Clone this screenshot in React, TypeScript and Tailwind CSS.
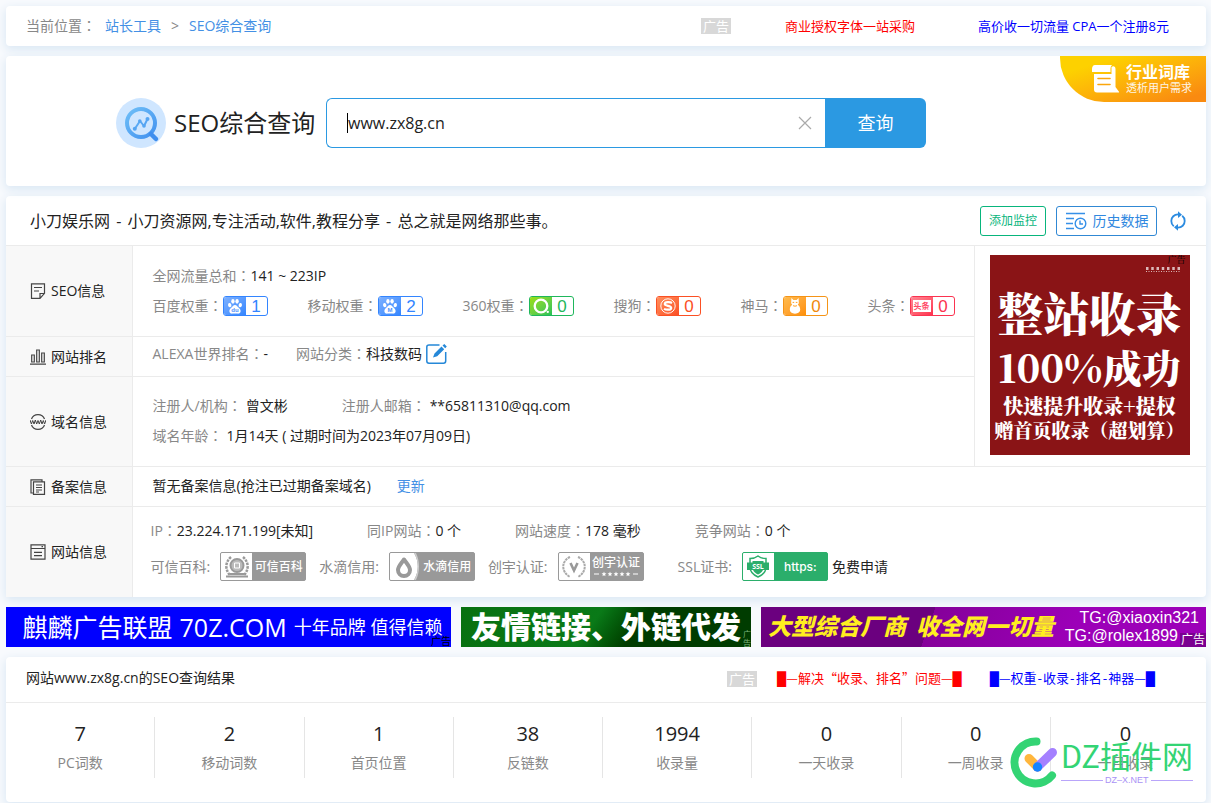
import type { ReactNode } from "react";

const CARD = "rounded bg-white shadow-[0_3px_10px_1px_#dbe8f4]";

function PawIcon({ mark }: { mark: string }) {
  return (
    <svg viewBox="0 0 20 20" className="size-4" fill="#fff">
      <ellipse cx="3.4" cy="9" rx="2.1" ry="2.7" transform="rotate(-12 3.4 9)" />
      <ellipse cx="7.4" cy="4.2" rx="2.1" ry="2.9" />
      <ellipse cx="12.6" cy="4.2" rx="2.1" ry="2.9" />
      <ellipse cx="16.6" cy="9" rx="2.1" ry="2.7" transform="rotate(12 16.6 9)" />
      <path d="M10 8.6c2 0 2.700 1.500 4 3 1.400 1.500 3.300 2.600 3 5.300-.3 2.300-2.300 2.800-4 2.600-1.200-.2-4.800-.2-6 0-1.700.2-3.700-.3-4-2.600-.3-2.700 1.600-3.800 3-5.300 1.300-1.500 2-3 4-3z" />
      <text x="10" y="17.500" textAnchor="middle" fontSize="7.500" fontWeight="700" fontFamily="Liberation Sans, sans-serif" fill="#4a90fb">{mark}</text>
    </svg>
  );
}

const rankIcons: Record<string, ReactNode> = {
  baidu: <PawIcon mark="du" />,
  mobile: <PawIcon mark="M" />,
  so360: (
    <svg viewBox="0 0 20 20" className="size-[18px]">
      <circle cx="10" cy="10" r="7" fill="none" stroke="#fff" strokeWidth="2.600" />
      <circle cx="17.500" cy="16.500" r="1.300" fill="#fff" />
    </svg>
  ),
  sogou: (
    <svg viewBox="0 0 20 20" className="size-4" fill="none" stroke="#fff">
      <circle cx="10" cy="10" r="9" strokeWidth="1.200" />
      <path d="M15 6.200C13 5 6 4.500 6 7.600c0 2.600 8 1.900 8 4.800 0 3-6.500 2.600-9 1.200" strokeWidth="2.800" />
    </svg>
  ),
  shenma: (
    <svg viewBox="0 0 20 20" className="size-4" fill="#fff">
      <path d="M5.500 0l2.500 2.500h4L14.500 0l.3 6.500-1.300 2c2 1.500 3 3.500 3 6 0 3-2.500 5.200-6.500 5.200s-6.500-2.200-6.500-5.200c0-2.500 1-4.500 3-6l-1.300-2z" />
      <path d="M7 5.500h2M11 5.500h2M7.500 9.500c1.500.9 3.500.9 5 0" stroke="#ff9c1a" strokeWidth="1.200" fill="none" />
    </svg>
  ),
  toutiao: (
    <span className="flex h-3 w-[18px] items-center justify-center bg-white text-[8px] leading-none font-bold text-[#ff4a66]">头条</span>
  ),
};

const ranks = [
  { label: "百度权重：", icon: "baidu", value: 1, frame: "border-[#3385ff] text-[#3385ff]", fill: "from-[#7db1ff] to-[#3385ff]" },
  { label: "移动权重：", icon: "mobile", value: 2, frame: "border-[#3385ff] text-[#3385ff]", fill: "from-[#7db1ff] to-[#3385ff]" },
  { label: "360权重：", icon: "so360", value: 0, frame: "border-[#1fb75c] text-[#1fb75c]", fill: "from-[#9be000] to-[#1fc256]" },
  { label: "搜狗：", icon: "sogou", value: 0, frame: "border-[#fb5024] text-[#fb5024]", fill: "from-[#ff8f5c] to-[#fb4d22]" },
  { label: "神马：", icon: "shenma", value: 0, frame: "border-[#f59417] text-[#f08a0c]", fill: "from-[#ffbb4d] to-[#ff8f00]" },
  { label: "头条：", icon: "toutiao", value: 0, frame: "border-[#fb3350] text-[#fb3350]", fill: "from-[#ff8593] to-[#ff2d4f]" },
];

function RankBadge({ icon, value, frame, fill }: { icon: string; value: number; frame: string; fill: string }) {
  return (
    <a href="#" className={`flex h-5 w-[45px] overflow-hidden rounded-[3px] border ${frame}`}>
      <span className={`flex w-[22px] items-center justify-center bg-linear-to-br ${fill}`}>{rankIcons[icon]}</span>
      <span className="flex flex-1 items-center justify-center font-['Liberation_Sans',sans-serif] text-[17px] leading-none">{value}</span>
    </a>
  );
}

function RowLabel({ icon, children }: { icon: ReactNode; children: ReactNode }) {
  return (
    <th scope="row" className="w-[126px] border-r border-[#ebebeb] bg-[#f8f8f8] p-0 pl-6 text-left align-middle font-normal">
      <span className="flex items-center gap-[5px]">
        <svg viewBox="0 0 16 16" className="size-4" fill="none" stroke="#444" strokeWidth="1.200">{icon}</svg>
        {children}
      </span>
    </th>
  );
}

/* The TC face centres the full-width colon in its cell. */
function Label({ text }: { text: string }) {
  const wide = text.endsWith("：");
  return (
    <span className="text-[#888]">
      {wide ? text.slice(0, -1) : text}
      {wide && <span className="font-['Noto_Sans_CJK_TC',sans-serif] leading-none">：</span>}
    </span>
  );
}

function Field({ label, children, gap = "" }: { label: string; children: ReactNode; gap?: string }) {
  return (
    <span className={`flex items-center ${gap}`}>
      <Label text={label} />
      {children}
    </span>
  );
}

function CertBadge({ icon, title, stars }: { icon: ReactNode; title: string; stars?: boolean }) {
  return (
    <a href="#" className="flex h-[29px] w-[86px] overflow-hidden rounded-[2px] border border-[#999] bg-[#999] text-white">
      <span className="flex w-[31px] items-center justify-center bg-white">{icon}</span>
      <span className="flex flex-1 flex-col items-center justify-center text-xs leading-[14px] font-medium">
        {title}
        {stars && (
          <svg viewBox="0 0 46 8" className="h-2 w-[46px]" fill="#fff">
            <path d="M1 3.500h5v1H1zM40 3.500h5v1h-5z" />
            {[11, 17, 23, 29, 35].map((x) => (
              <path key={x} transform={`translate(${x} 4)`} d="M0-2.500.7-.8 2.400-.8 1.100.4 1.500 2.200 0 1.200-1.500 2.200-1.100.4-2.400-.8-.7-.8z" />
            ))}
          </svg>
        )}
      </span>
    </a>
  );
}

function AdTag() {
  return <span className="bg-[#d8d8d8] px-[2px] text-[13px] leading-4 text-white">广告</span>;
}

function Block() {
  return <span className="font-['Liberation_Sans',sans-serif] text-[13px]">█</span>;
}

function Dash() {
  return <span className="mx-px">-</span>;
}

const stats = [
  ["7", "PC词数"],
  ["2", "移动词数"],
  ["1", "首页位置"],
  ["38", "反链数"],
  ["1994", "收录量"],
  ["0", "一天收录"],
  ["0", "一周收录"],
  ["0", "一月收录"],
];

export default function App() {
  return (
    <div className="flex min-h-screen flex-col gap-2.5 overflow-hidden bg-[#f8fafd] pt-1.5 pr-[5px] pl-1.5 font-['Open_Sans','Noto_Sans_CJK_SC',sans-serif] text-sm text-[#222]">
      <header className={`flex h-10 items-center justify-between pr-[37px] pl-5 ${CARD}`}>
        <nav className="flex items-center text-[#888]">
          <Label text="当前位置：" />
          <a href="#" className="ml-[9px] text-[#4490e5]">站长工具</a>
          <span className="mx-[10px]">&gt;</span>
          <a href="#" className="text-[#4490e5]">SEO综合查询</a>
        </nav>
        <div className="flex items-center text-[13px]">
          <AdTag />
          <a href="#" className="ml-[54px] text-[#f00]">商业授权字体一站采购</a>
          <a href="#" className="ml-[63px] text-[#00f]">高价收一切流量 CPA一个注册8元</a>
        </div>
      </header>

      <section className={`relative flex h-[130px] items-start pt-[42px] pl-[110px] ${CARD}`}>
        <div className="flex h-[50px] items-center">
          <svg viewBox="0 0 50 50" className="size-[50px]" fill="none">
            <defs>
              <linearGradient id="lens" x1="10" y1="10" x2="40" y2="42" gradientUnits="userSpaceOnUse">
                <stop stopColor="#6fc0f8" />
                <stop offset="1" stopColor="#3f8eee" />
              </linearGradient>
            </defs>
            <circle cx="25" cy="25" r="25" fill="#cfe6ff" />
            <circle cx="25" cy="25" r="14" stroke="url(#lens)" strokeWidth="4" />
            <path d="M35 36l5 5" stroke="#3f8eee" strokeWidth="4.500" strokeLinecap="round" />
            <path d="M19 30.500l5-7.500 4 5 3.500-7" stroke="url(#lens)" strokeWidth="2" strokeLinejoin="round" />
            <g fill="#55a5f2">
              <circle cx="18.800" cy="30.800" r="2" />
              <circle cx="23.800" cy="23" r="1.800" />
              <circle cx="28" cy="28" r="1.800" />
              <circle cx="31.500" cy="21" r="2" />
            </g>
          </svg>
          <h1 className="ml-2 w-[152px] text-2xl whitespace-nowrap">SEO综合查询</h1>
        </div>
        <form className="flex h-[50px] w-[600px]" onSubmit={(e) => e.preventDefault()}>
          <div className="flex flex-1 items-center rounded-l-md border border-r-0 border-[#2b99e2] pr-[13px] pl-5">
            <span className="h-5 w-px bg-black" />
            <input aria-label="域名" defaultValue="www.zx8g.cn" className="min-w-0 flex-1 bg-transparent text-base outline-none" />
            <button type="button" aria-label="清空">
              <svg viewBox="0 0 14 14" className="size-3.5" stroke="#aaa" strokeWidth="1.200">
                <path d="M1 1l12 12M13 1L1 13" />
              </svg>
            </button>
          </div>
          <button type="submit" className="w-[101px] rounded-r-md bg-[#2b99e2] text-lg text-white">查询</button>
        </form>
        <a href="#" className="absolute top-0 right-0 flex h-[46px] w-[146px] items-center rounded-bl-[44px] bg-linear-to-br from-[#fdd100] from-20% to-[#f98a10] to-90% pl-8 text-white">
          <svg viewBox="0 0 27 28" className="h-7 w-[27px]">
            <path d="M3 0h17c-2 2-1.500 4-1.500 7H0V4c0-2 1-4 3-4z" fill="#fff" />
            <path d="M19.500 2c2-1.500 4-.5 4 2v18l4 5.500H5c-2 0-3-1-3-3V9h17.500z" fill="#fff" />
            <path d="M6 13.500h12M6 19.500h12" stroke="#fba60c" strokeWidth="1.600" strokeLinecap="round" />
          </svg>
          <span className="ml-[7px] flex flex-col">
            <b className="text-base leading-[18px] font-bold">行业词库</b>
            <span className="text-[11px] leading-[14px] whitespace-nowrap opacity-90">透析用户需求</span>
          </span>
        </a>
      </section>

      <section className={CARD}>
        <div className="flex h-[49px] items-center pr-5 pl-6">
          <h2 className="flex-1 text-base">
            小刀娱乐网<span className="mx-0.5"> - </span>小刀资源网,专注活动,软件,教程分享<span className="mx-0.5"> - </span>总之就是网络那些事。
          </h2>
          <button type="button" className="h-[30px] w-[66px] rounded-[3px] border border-[#08b57c] text-xs text-[#08b57c]">添加监控</button>
          <button type="button" className="ml-2.5 flex h-[30px] w-[101px] items-center justify-center gap-1.5 rounded-[3px] border border-[#3088d4] text-sm text-[#3088e0]">
            <svg viewBox="0 0 22 18" className="h-[18px] w-[22px]" fill="none" stroke="#3690e8" strokeWidth="1.400">
              <path d="M1 1.500h19M1 6.500h8M1 11.500h7M1 16.500h8" />
              <circle cx="15.500" cy="11.500" r="5.300" />
              <path d="M15 8.500v3.500h3" />
            </svg>
            历史数据
          </button>
          <button type="button" aria-label="刷新" className="ml-[13px]">
            <svg viewBox="0 0 16 20" className="h-5 w-4" fill="none" stroke="#2b8be0" strokeWidth="1.800">
              <path d="M9 3.500C4 3 1.300 6.500 1.300 10c0 2 .8 4 2.500 5.300M7 16.500c5 .5 7.700-3 7.700-6.500 0-2-.8-4-2.500-5.300" />
              <path d="M8 .3l4 3.500-4 3.200zM8 13v6.700L4 16.200z" fill="#2b8be0" stroke="none" />
            </svg>
          </button>
        </div>
        <table className="w-full border-collapse">
          <tbody>
            <tr className="h-[91px] border-t border-[#ebebeb]">
              <RowLabel icon={<path d="M1.500.8h13v9.500l-4.500 5H1.500zM14.500 10.500H10v4.500M4 4.500h8M4 8h5" />}>SEO信息</RowLabel>
              <td className="p-0 pl-5">
                <div className="flex h-[30px] items-center">
                  <Field label="全网流量总和：">141 ~ 223IP</Field>
                </div>
                <div className="flex h-[30px] items-center gap-10 whitespace-nowrap">
                  {ranks.map(({ label, ...badge }) => (
                    <Field key={label} label={label}>
                      <RankBadge {...badge} />
                    </Field>
                  ))}
                </div>
              </td>
              <td rowSpan={3} className="w-[232px] border-l border-[#ebebeb] p-0 pt-[9px] pl-[15px] align-top">
                <a href="#" className="relative flex size-[200px] flex-col items-center bg-[#8a1416] pt-[29px] font-['Noto_Serif_CJK_SC','Liberation_Serif','Noto_Sans_CJK_SC',serif] font-black whitespace-nowrap text-white">
                  <span className="absolute top-0 right-1 text-[9px] leading-[10px] font-normal text-black">广告</span>
                  <svg viewBox="0 0 34 5" className="absolute top-3 right-2.5 h-[5px] w-[34px]" stroke="#fff" strokeOpacity="0.700">
                    <path d="M0 1.500h34" strokeWidth="3" strokeDasharray="2.500 2.750" />
                    <path d="M0 4.500h34" strokeWidth="1" strokeDasharray="1 1.500" />
                  </svg>
                  <span className="text-[46px] leading-[54px]">整站收录</span>
                  <span className="text-[39px] leading-[56px]">100%成功</span>
                  <span className="text-xl leading-6">快速提升收录+提权</span>
                  <span className="text-[19px] leading-6">赠首页收录（超划算）</span>
                </a>
              </td>
            </tr>
            <tr className="h-10 border-t border-[#ebebeb]">
              <RowLabel icon={<path d="M0 15.200h16M1.700 13V6h2.600v7zM6.700 13V1h2.600v12zM11.700 13V4h2.600v9z" />}>网站排名</RowLabel>
              <td className="p-0 pb-1.5 pl-5">
                <div className="flex items-center gap-7">
                  <Field label="ALEXA世界排名：">-</Field>
                  <Field label="网站分类：">
                    科技数码
                    <a href="#" aria-label="编辑" className="ml-1">
                      <svg viewBox="0 0 21 20" className="h-5 w-[21px]" fill="none" stroke="#2588d8" strokeWidth="1.500">
                        <path d="M13.500 1H3C1.700 1 .8 1.700.8 3v14c0 1.300.9 2.200 2.200 2.200h14.500c1.300 0 2.200-.9 2.200-2.200V8" />
                        <path d="M7 13.500l1.500-4 7-7 2.700 2.700-7 7zM16.500 1.500L18.300 0l2.500 2.500L19.200 4.200z" fill="#2588d8" stroke="none" />
                      </svg>
                    </a>
                  </Field>
                </div>
              </td>
            </tr>
            <tr className="h-[90px] border-t border-[#ebebeb]">
              <RowLabel
                icon={
                  <>
                    <path d="M1.500 5C2.500 2.300 5 .7 8 .7S13.500 2.300 14.500 5M1.500 11c1 2.700 3.500 4.300 6.500 4.300s5.500-1.600 6.500-4.300" />
                    <path d="M0 6l1.400 4L2.700 6.500 4 10l1.300-4L6.700 10 8 6.500 9.300 10l1.400-4L12 10l1.300-3.500L14.600 10 16 6" strokeWidth="1" />
                  </>
                }
              >
                域名信息
              </RowLabel>
              <td className="p-0 pb-0.5 pl-5">
                <div className="flex h-[30px] items-center gap-[54px]">
                  <Field label="注册人/机构：" gap="gap-1">曾文彬</Field>
                  <Field label="注册人邮箱：" gap="gap-1">**65811310@qq.com</Field>
                </div>
                <div className="flex h-[30px] items-center">
                  <Field label="域名年龄：" gap="gap-1">1月14天 ( 过期时间为2023年07月09日)</Field>
                </div>
              </td>
            </tr>
            <tr className="h-10 border-t border-[#ebebeb]">
              <RowLabel icon={<path d="M3.500 14H1V.8h11v1.700M3.500 2.800h11v12.500h-11zM6 6h6M6 8.500h6M6 11h6M6 13h3" />}>备案信息</RowLabel>
              <td colSpan={2} className="p-0 pb-0.5 pl-5">
                暂无备案信息(抢注已过期备案域名)
                <a href="#" className="ml-[26px] text-[#4490e5]">更新</a>
              </td>
            </tr>
            <tr className="h-[90px] border-t border-[#ebebeb]">
              <RowLabel icon={<path d="M1 .8h14v14.400H1zM1 4.500h14M4 8.300h8M4 11.700h8M11.500 2.700h1.500" />}>网站信息</RowLabel>
              <td colSpan={2} className="p-0 pl-[18px]">
                <div className="flex h-[30px] items-center gap-[54px]">
                  <Field label="IP：">23.224.171.199[未知]</Field>
                  <Field label="同IP网站：">0 个</Field>
                  <Field label="网站速度：">178 毫秒</Field>
                  <Field label="竞争网站：">0 个</Field>
                </div>
                <div className="flex h-[42px] items-center">
                  <Field label="可信百科:" gap="gap-2.5">
                    <CertBadge
                      title="可信百科"
                      icon={
                        <svg viewBox="0 0 24 24" className="size-6" fill="none" stroke="#999">
                          <path d="M6 2C0 7 0 15 5 20M18 2c6 5 6 13 1 18" strokeWidth="2.500" strokeDasharray="2.500 1" />
                          <circle cx="12" cy="10.500" r="6.500" fill="#bbb" strokeWidth="2" />
                          <path d="M9.500 8h5v5h-5z" stroke="#fff" />
                          <path d="M1 21.500h22M5 19h14" strokeWidth="2" />
                        </svg>
                      }
                    />
                  </Field>
                  <span className="ml-[13px]">
                    <Field label="水滴信用:" gap="gap-2.5">
                      <CertBadge
                        title="水滴信用"
                        icon={
                          <svg viewBox="0 0 31 27" className="h-[27px] w-[31px]">
                            <path d="M24 0c5 8 5 19 0 27h7V0z" fill="#999" />
                            <path d="M24 0c5 8 5 19 0 27h2c4-8 4-19 0-27z" fill="#ccc" />
                            <path d="M14 6.500c-3.500 5-6 7.200-6 10.500a6 6 0 0 0 12 0c0-3.300-2.500-5.500-6-10.500z" fill="none" stroke="#999" strokeWidth="4" strokeLinejoin="round" />
                          </svg>
                        }
                      />
                    </Field>
                  </span>
                  <span className="ml-[13px]">
                    <Field label="创宇认证:" gap="gap-2.5">
                      <CertBadge
                        title="创宇认证"
                        stars
                        icon={
                          <svg viewBox="0 0 24 24" className="size-6" fill="none" stroke="#aaa">
                            <path d="M8 2C-1 6-1 17 8 22M16 2c9 4 9 15 0 20" strokeWidth="2" strokeDasharray="2.500 .7" />
                            <path d="M8.500 8l3.500 7.500L15.500 8" stroke="#999" strokeWidth="2.600" />
                          </svg>
                        }
                      />
                    </Field>
                  </span>
                  <span className="ml-[34px]">
                    <Field label="SSL证书:" gap="gap-2.5">
                      <a href="#" className="flex h-[29px] w-[86px] overflow-hidden rounded-[2px] border border-[#2bae6b] bg-[#2bae6b] text-white">
                        <span className="flex w-[31px] items-center justify-center bg-white">
                          <svg viewBox="0 0 22 23" className="h-[23px] w-[22px]">
                            <path d="M11 1c2.500 2 5 2.500 8 2.500V12c0 5-3.500 8-8 10-4.500-2-8-5-8-10V3.500C6 3.500 8.500 3 11 1z" fill="none" stroke="#2bae6b" strokeWidth="1.500" />
                            <path d="M5.500 6H16.500V12c0 4-2.500 6-5.500 7.500C8 18 5.500 16 5.500 12z" fill="#2bae6b" />
                            <path d="M0 7.500h22v7.500H0z" fill="#2bae6b" />
                            <text x="11" y="13.700" textAnchor="middle" fontSize="7" fontWeight="700" fill="#fff">SSL</text>
                          </svg>
                        </span>
                        <span className="flex flex-1 items-center justify-center font-['Inter',sans-serif] text-xs font-medium">https:</span>
                      </a>
                    </Field>
                  </span>
                  <a href="#" className="ml-1">免费申请</a>
                </div>
              </td>
            </tr>
          </tbody>
        </table>
      </section>

      <div className="grid h-10 grid-cols-[445fr_290fr_445fr] gap-2.5 whitespace-nowrap">
        <a href="#" className="relative flex items-center justify-center gap-[7px] overflow-hidden bg-[#00f] pl-2 text-[25px] leading-10 text-white">
          <span>麒麟广告联盟</span>
          <span>70Z.COM</span>
          <span className="text-lg">十年品牌 值得信赖</span>
          <span className="absolute right-0 bottom-0 text-[10px] leading-3 text-black">广告</span>
        </a>
        <a href="#" className="relative flex items-center justify-center overflow-hidden bg-linear-125 from-[#087010] via-[#0a7a18] via-45% to-[#003c00] to-60% text-[30px] leading-10 font-black text-white">
          友情链接、外链代发
          <span className="absolute right-0 bottom-0 w-2 text-[8px] leading-[9px] font-normal break-all whitespace-normal text-[#7fb57f]">广告</span>
        </a>
        <a href="#" className="relative flex items-center justify-between overflow-hidden bg-linear-110 from-[#6b007f] from-38% via-[#85009a] via-38% to-[#9c00b8] to-70% pr-[7px] pl-[7px] text-white">
          <span className="flex gap-2.5 text-[23px] font-black text-[#ffee1f] italic">
            <span>大型综合厂商</span>
            <span>收全网一切量</span>
          </span>
          <span className="flex flex-col items-end font-['Liberation_Sans',sans-serif] text-base leading-[18px]">
            <span>TG:@xiaoxin321</span>
            <span className="mr-[21px]">TG:@rolex1899</span>
          </span>
          <span className="absolute right-0 bottom-0 bg-[#7a0090] px-px text-xs leading-[14px]">广告</span>
        </a>
      </div>

      <section className={`relative ${CARD}`}>
        <div className="flex h-[46px] items-center justify-between border-b border-[#ebebeb] pr-[51px] pl-5">
          <h2 className="pb-0.5">网站www.zx8g.cn的SEO查询结果</h2>
          <div className="flex items-center text-[13px]">
            <AdTag />
            <a href="#" className="ml-5 font-['Noto_Sans_CJK_SC',sans-serif] text-[#f00]"><Block />—解决“收录、排名”问题—<Block /></a>
            <a href="#" className="ml-7 font-['Noto_Sans_CJK_SC',sans-serif] text-[#00f]"><Block />—权重<Dash />收录<Dash />排名<Dash />神器—<Block /></a>
          </div>
        </div>
        <dl className="grid grid-cols-8 py-[14px] pr-1.5 pb-6">
          {stats.map(([value, label]) => (
            <div key={label} className="flex h-[61px] flex-col-reverse items-center border-r border-[#e5e5e5] pb-0.5 last:border-r-0">
              <dt className="leading-[26px] text-[#888]">{label}</dt>
              <dd className="text-xl leading-8">{value}</dd>
            </div>
          ))}
        </dl>
        <div className="absolute right-[13px] bottom-3.5 flex items-center gap-1">
          <svg viewBox="0 0 47 51" className="h-[51px] w-[47px]" fill="none" strokeLinecap="round">
            <path d="M26.500 4.500A21 21 0 1 0 42 38.500" stroke="#33d474" strokeWidth="8" />
            <path d="M19 21.500l8.500 8.500" stroke="#ffb63d" strokeWidth="9" />
            <path d="M27.500 30L42.500 15.500" stroke="#a480ff" strokeWidth="9" />
            <circle cx="27.500" cy="30" r="4.700" fill="#1684ff" />
          </svg>
          <div className="flex flex-col text-[#33d474]">
            <span className="font-['Noto_Sans_CJK_SC',sans-serif] text-[31px] leading-8">DZ插件网</span>
            <span className="flex items-center gap-0.5 pt-1 font-['Liberation_Sans',sans-serif] text-[9px] leading-[10px] text-[#a992f5] before:h-px before:flex-1 before:bg-[#b9a5fa] after:h-px after:flex-1 after:bg-[#b9a5fa]">DZ–X.NET</span>
          </div>
        </div>
      </section>
    </div>
  );
}
